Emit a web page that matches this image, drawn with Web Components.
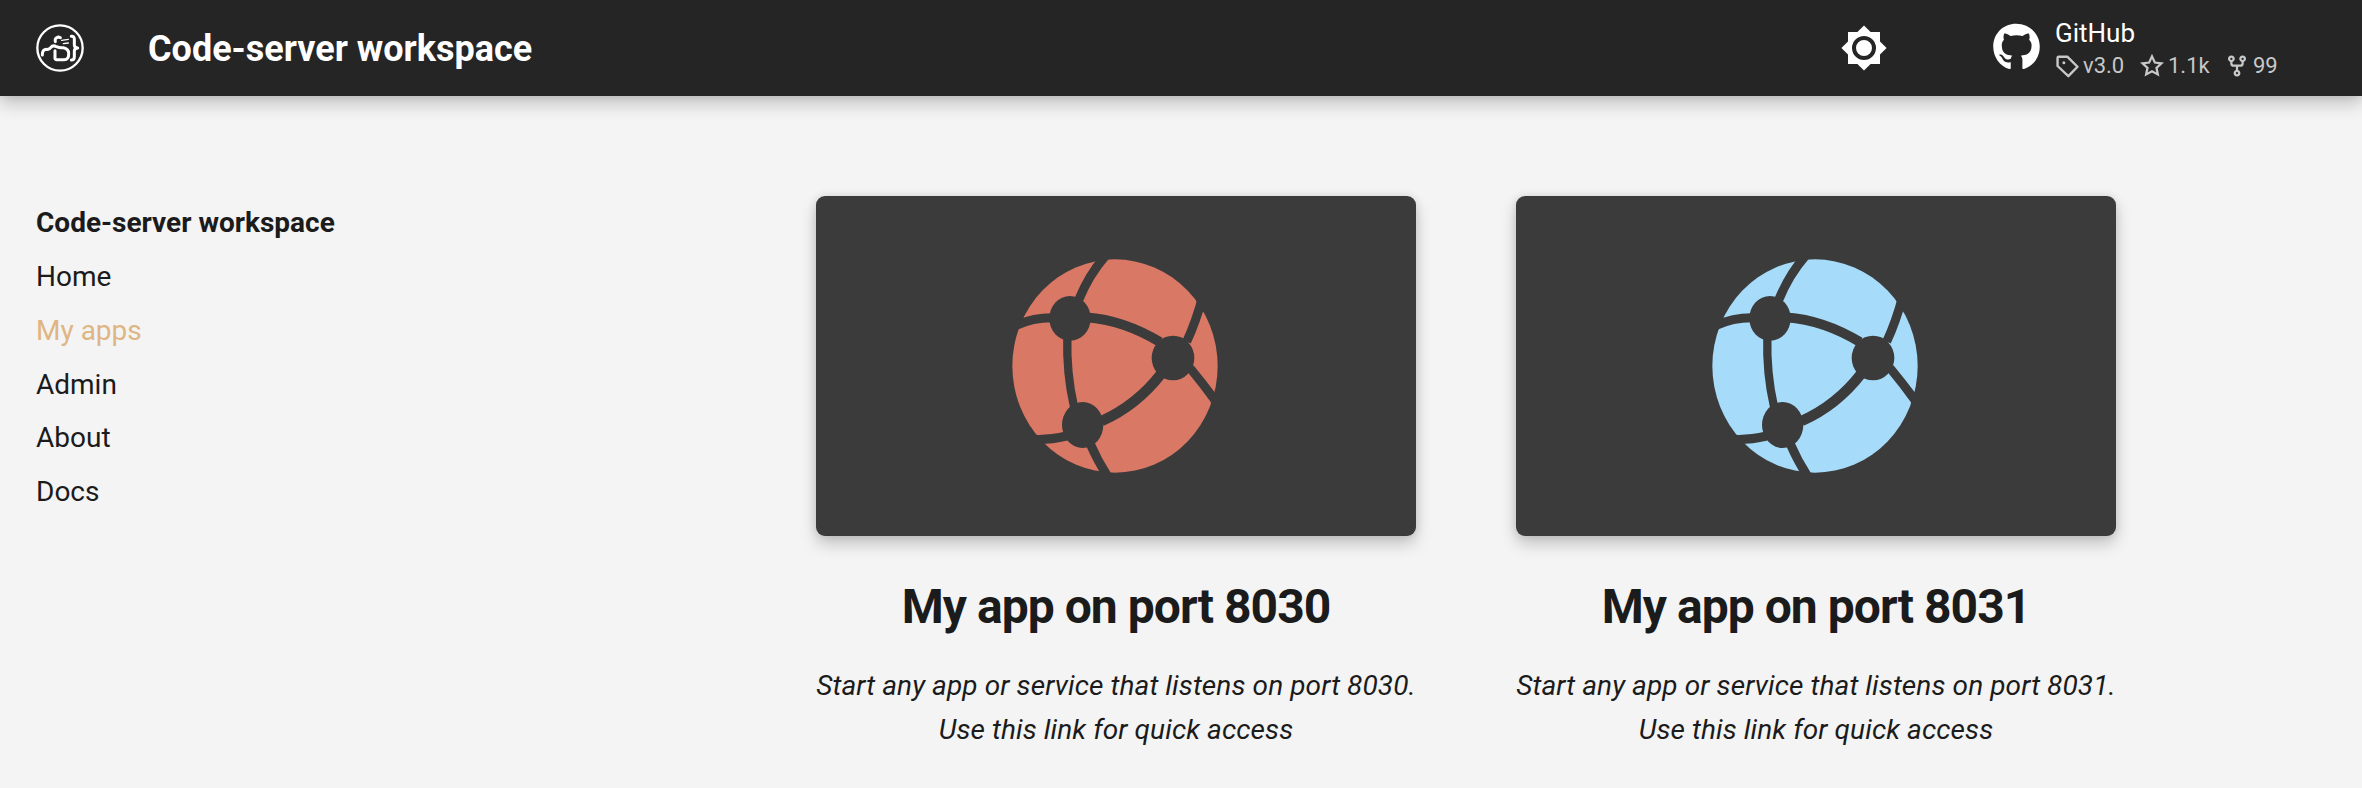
<!DOCTYPE html>
<html lang="en">
<head>
<meta charset="utf-8">
<title>Code-server workspace</title>
<style>
html,body{margin:0;height:100%}
body{background:#f4f4f4;color:#1b1b1b;font-family:Roboto,"Liberation Sans",sans-serif;overflow:hidden;-webkit-font-smoothing:antialiased}
</style>
</head>
<body>
<docs-page>
  <docs-header slot="header" heading="Code-server workspace">
    <repo-info name="GitHub" version="v3.0" stars="1.1k" forks="99"></repo-info>
  </docs-header>
  <docs-nav slot="nav" heading="Code-server workspace">
    <nav-item>Home</nav-item>
    <nav-item active>My apps</nav-item>
    <nav-item>Admin</nav-item>
    <nav-item>About</nav-item>
    <nav-item>Docs</nav-item>
  </docs-nav>
  <app-card port="8030" color="#d87865"></app-card>
  <app-card port="8031" color="#a7dbfa"></app-card>
</docs-page>
<script>
const define = (name, html) => customElements.define(name, class extends HTMLElement {
  constructor() {
    super();
    this.attachShadow({mode: 'open'});
  }
  connectedCallback() {
    this.shadowRoot.innerHTML = typeof html === 'function' ? html(this) : html;
  }
});

define('docs-page', `
<style>
:host{display:block;height:788px}
main{display:grid;grid-template-columns:780px 1fr;padding:100px 0 0 36px}
.cards{display:grid;grid-template-columns:600px 600px;gap:100px}
</style>
<slot name="header"></slot>
<main><slot name="nav"></slot><div class="cards"><slot></slot></div></main>`);

define('docs-header', el => `
<style>
:host{display:flex;align-items:center;height:96px;background:#252525;color:#fff;position:relative;
 box-shadow:0 0 8px rgba(0,0,0,.1),0 8px 16px rgba(0,0,0,.2)}
svg{display:block}
.logo{margin-left:36px;width:48px;height:48px}
h1{margin:0 0 0 64px;font-size:36px;line-height:96px;font-weight:700;flex:1;padding-top:1px;box-sizing:border-box;height:96px}
.sun{width:48px;height:48px;margin-right:105px}
</style>
<svg class="logo" viewBox="48 42 144 144" fill="none" stroke="#fff" stroke-linecap="round" stroke-linejoin="round">
  <circle cx="120" cy="114" r="68" stroke-width="7"/>
  <path stroke-width="9" d="M67 135Q67 118 80 118Q88 119 92 113Q99 104 109 110Q121 115 130 113Q146 116 146 130Q147 149 132 149H109Q104 149 105 142V122"/>
  <path stroke-width="9" d="M154 79Q163 78 163 87V105Q163 113 173 114Q163 115 163 123V140Q163 150 154 150"/>
  <path stroke-width="9" d="M106 95Q103 84 115 81L121 83"/>
  <path stroke-width="4" d="M125 91L145 88M130 101L145 99"/>
</svg>
<h1>${el.getAttribute('heading')}</h1>
<svg class="sun" viewBox="0 0 24 24" fill="#fff"><path d="M12 8a4 4 0 0 0-4 4 4 4 0 0 0 4 4 4 4 0 0 0 4-4 4 4 0 0 0-4-4m0 10a6 6 0 0 1-6-6 6 6 0 0 1 6-6 6 6 0 0 1 6 6 6 6 0 0 1-6 6m8-9.31V4h-4.69L12 .69 8.69 4H4v4.69L.69 12 4 15.31V20h4.69L12 23.31 15.31 20H20v-4.69L23.31 12z"/></svg>
<slot></slot>`);

define('repo-info', el => `
<style>
:host{display:flex;width:369px;height:96px}
.mark{width:47px;height:48px;margin:23px 15px 0 0}
.name{font-size:26px;line-height:30px;margin-top:18px}
.facts{display:flex;margin-top:4px;font-size:22px;line-height:28px;color:#c8c8c8}
.facts span{display:flex;align-items:center;gap:4px;white-space:nowrap}
.facts span:nth-child(-n+2){width:85px}
svg{display:block;flex:none}
.facts svg{width:24px;height:24px}
</style>
<svg class="mark" viewBox="0 0 496 512" fill="#fff"><path d="M244.8 8C106.1 8 0 113.3 0 252c0 110.9 69.8 205.8 169.5 239.2 12.8 2.3 17.3-5.6 17.3-12.1 0-6.2-.3-40.4-.3-61.4 0 0-70 15-84.7-29.8 0 0-11.4-29.1-27.8-36.6 0 0-22.9-15.7 1.6-15.4 0 0 24.9 2 38.6 25.8 21.9 38.6 58.6 27.5 72.9 20.9 2.3-16 8.8-27.1 16-33.7-55.9-6.2-112.3-14.3-112.3-110.5 0-27.5 7.6-41.3 23.6-58.9-2.6-6.5-11.1-33.3 2.6-67.9 20.9-6.5 69 27 69 27 20-5.6 41.5-8.5 62.8-8.5s42.8 2.9 62.8 8.5c0 0 48.1-33.6 69-27 13.7 34.7 5.2 61.4 2.6 67.9 16 17.7 25.8 31.5 25.8 58.9 0 96.5-58.9 104.2-114.8 110.5 9.2 7.9 17 22.9 17 46.4 0 33.7-.3 75.4-.3 83.6 0 6.5 4.6 14.4 17.3 12.1C428.2 457.8 496 362.9 496 252 496 113.3 383.5 8 244.8 8z"/></svg>
<div>
  <div class="name">${el.getAttribute('name')}</div>
  <div class="facts">
    <span><svg viewBox="0 0 16 16" fill="none" stroke="currentColor" stroke-width="1.6" stroke-linejoin="round"><path d="M1.7 2.6Q1.7 1.8 2.5 1.8H8.2L15 8.5L8.9 14.8L1.7 8Z"/><circle cx="5.9" cy="5.9" r="1" fill="currentColor" stroke="none"/></svg>${el.getAttribute('version')}</span>
    <span><svg viewBox="0 0 16 16" fill="none" stroke="currentColor" stroke-width="1.5" stroke-linejoin="miter"><path d="M8 1.6L9.9 5.7L14.3 6.2L11 9.2L11.9 13.6L8 11.5L4.1 13.6L5 9.2L1.7 6.2L6.1 5.7Z"/></svg>${el.getAttribute('stars')}</span>
    <span><svg viewBox="0 0 16 16" fill="currentColor"><path d="M5 5.372v.878c0 .414.336.75.75.75h4.5a.75.75 0 0 0 .75-.75v-.878a2.25 2.25 0 1 1 1.5 0v.878a2.25 2.25 0 0 1-2.25 2.25h-1.5v2.128a2.251 2.251 0 1 1-1.5 0V8.5h-1.5A2.25 2.25 0 0 1 3.5 6.25v-.878a2.25 2.25 0 1 1 1.5 0M5 3.25a.75.75 0 1 0-1.5 0 .75.75 0 0 0 1.5 0m6.75.75a.75.75 0 1 0 0-1.5.75.75 0 0 0 0 1.5m-3 8.75a.75.75 0 1 0-1.5 0 .75.75 0 0 0 1.5 0"/></svg>${el.getAttribute('forks')}</span>
  </div>
</div>`);

define('docs-nav', el => `
<style>
:host{display:block;font-size:28px}
b{display:block;line-height:36px;margin:9px 0 18px}
</style>
<b>${el.getAttribute('heading')}</b><slot></slot>`);

define('nav-item', `
<style>
:host{display:block;line-height:36px;margin-bottom:17.8px}
:host([active]){color:#dfb583}
</style><slot></slot>`);

define('globe-art', el => `
<style>:host,svg{display:block;width:250px;height:250px}</style>
<svg viewBox="3 3 750 750">
  <ellipse cx="375" cy="378" rx="308" ry="320" fill="${el.getAttribute('color')}"/>
  <g fill="none" stroke="#3b3b3b">
    <g stroke-width="27">
      <path d="M346 48Q297 104 266 180"/>
      <path d="M78 256Q130 232 190 233"/>
      <path stroke-width="29" d="M290 232Q400 240 510 306"/>
      <path stroke-width="25" d="M232 290Q229 400 252 500"/>
      <path stroke-width="31" d="M335 543Q440 496 513 402"/>
      <path d="M638 170Q618 245 590 305"/>
      <path d="M600 384Q638 430 677 483"/>
      <path d="M120 597Q170 602 230 588"/>
      <path d="M300 610Q322 662 354 711"/>
    </g>
  </g>
  <g fill="#3b3b3b">
    <ellipse cx="240" cy="235" rx="62" ry="67"/>
    <ellipse cx="549" cy="354" rx="64" ry="67"/>
    <ellipse cx="278" cy="555" rx="62" ry="69"/>
    <path d="M620 187L643 215L700 220L655 150Z"/>
    <path d="M662 490L677 457L710 470L690 520Z"/>
  </g>
</svg>`);

define('app-card', el => {
  const port = el.getAttribute('port');
  return `
<style>
:host{display:block;text-align:center}
.cover{display:flex;align-items:center;justify-content:center;height:340px;border-radius:9px;background:#3b3b3b;
 box-shadow:0 0 8px rgba(0,0,0,.1),0 8px 16px rgba(0,0,0,.2)}
h2{margin:40px 0 0;font-size:48px;line-height:62px;font-weight:700;letter-spacing:-.02em}
p{margin:26px -20px 0;font-size:28px;line-height:44.4px;font-style:italic;letter-spacing:.1px}
</style>
<div class="cover"><globe-art color="${el.getAttribute('color')}"></globe-art></div>
<h2>My app on port ${port}</h2>
<p>Start any app or service that listens on port ${port}.<br>Use this link for quick access</p>`;
});
</script>
</body>
</html>
